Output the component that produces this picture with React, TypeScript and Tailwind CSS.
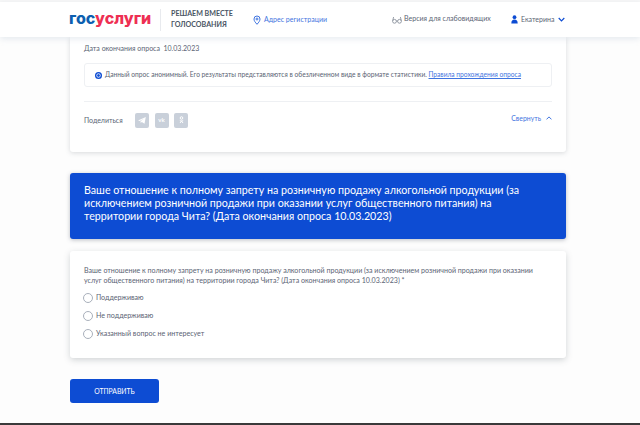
import React from "react";

const font = { fontFamily: '"Lato","Noto Sans",sans-serif' };

function Radio({ label }: { label: string }) {
  return (
    <label className="flex items-center h-[18px] gap-[3px] ml-[-1px]">
      <span className="w-[10px] h-[10px] rounded-full border border-[#a9b0bb] bg-white shrink-0" />
      <span className="text-[7.1px] text-[#5b6474]">{label}</span>
    </label>
  );
}

function Share({ children }: { children: React.ReactNode }) {
  return (
    <span className="w-[14px] h-[15px] rounded-[2px] bg-[#c9d0da] flex items-center justify-center">{children}</span>
  );
}

export default function App() {
  return (
    <div className="relative w-[640px] h-[425px] overflow-hidden bg-[#fdfdfd] flex flex-col" style={font}>
      <div className="h-[2px] bg-[#f7f7f7] shrink-0" />
      <header className="h-[35px] shrink-0 bg-white shadow-[0_2px_6px_rgba(170,185,205,0.28)] z-10 flex items-center">
        <span className="ml-[69px] w-[81px] text-[16px] font-extrabold leading-none mb-[3px] whitespace-nowrap" style={{ fontFamily: '"Inter",sans-serif' }}>
          <span className="text-[#0d5fb0]">гос</span>
          <span className="text-[#ee2f53]">услуги</span>
        </span>
        <span className="w-px h-[22px] bg-[#e8eaee] ml-[10px]" />
        <div className="ml-[10px] text-[7.1px] font-bold leading-[10.5px] text-[#4a5464] w-[82px]">
          <div>РЕШАЕМ ВМЕСТЕ</div>
          <div>ГОЛОСОВАНИЯ</div>
        </div>
        <svg width="8" height="10" viewBox="0 0 8 10" fill="none" stroke="#3f74e0" strokeWidth="1">
          <path d="M4 9.3C2.2 7.3 1 5.8 1 4a3 3 0 0 1 6 0c0 1.8-1.2 3.3-3 5.3z" />
          <circle cx="4" cy="4" r="1" />
        </svg>
        <span className="ml-[3px] text-[7px] text-[#3f74e0] w-[128px] whitespace-nowrap">Адрес регистрации</span>
        <svg width="10" height="8" viewBox="0 0 10 8" fill="none" stroke="#7d8592" strokeWidth="0.8">
          <circle cx="2.5" cy="5.3" r="1.9" />
          <circle cx="7.5" cy="5.3" r="1.9" />
          <path d="M4.4 5h1.2M.7 4.6 1.6 1M9.3 4.6 8.4 1" />
        </svg>
        <span className="ml-[2px] text-[7.05px] text-[#5b6474] w-[107px] whitespace-nowrap">Версия для слабовидящих</span>
        <svg width="7" height="9" viewBox="0 0 7 9" fill="#0d4cd3">
          <circle cx="3.5" cy="2.2" r="1.9" />
          <path d="M0.3 8.4C0.3 5.8 1.6 4.6 3.5 4.6s3.2 1.2 3.2 3.8z" />
        </svg>
        <span className="ml-[3px] text-[7px] text-[#5b6474]">Екатерина</span>
        <svg className="ml-[4px]" width="7" height="5" viewBox="0 0 7 5" fill="none" stroke="#0d4cd3" strokeWidth="1.2">
          <path d="M.7 1 3.5 3.8 6.3 1" />
        </svg>
      </header>

      <main className="w-[496px] ml-[70px] flex flex-col">
        <section className="bg-white rounded-b-[3px] shadow-[0_1px_5px_rgba(80,90,100,0.22)] h-[115px] px-[14px] pt-[6px] flex flex-col">
          <div className="text-[7px] text-[#5b6474] leading-[10px]">Дата окончания опроса&nbsp;&nbsp;10.03.2023</div>
          <div className="mt-[10px] h-[24px] rounded-[3px] border border-[#eef0f3] flex items-center pl-[10px] text-[6.65px] text-[#5b6474]">
            <svg className="shrink-0 mr-[3px]" width="7" height="7" viewBox="0 0 7 7">
              <circle cx="3.5" cy="3.5" r="3.5" fill="#0d4cd3" />
              <circle cx="3.5" cy="3.5" r="1.8" fill="none" stroke="#fff" strokeWidth="0.8" />
            </svg>
            <span className="whitespace-nowrap">
              Данный опрос анонимный. Его результаты представляются в обезличенном виде в формате статистики.{" "}
              <span className="text-[#3f74e0] underline">Правила прохождения опроса</span>
            </span>
          </div>
          <div className="mt-[14px] h-px bg-[#eef0f3]" />
          <div className="mt-[6px] flex items-center h-[24px]">
            <span className="text-[7px] text-[#5b6474] w-[51px]">Поделиться</span>
            <div className="flex gap-[5.5px]">
              <Share>
                <svg width="8" height="7" viewBox="0 0 8 7" fill="#fff"><path d="M0 3.4 7.8 0 6.5 6.8 3.8 5 2.7 6.1 2.5 4.3 6 1.6 1.9 4z" /></svg>
              </Share>
              <Share>
                <span className="text-[6px] font-bold text-white leading-none">vk</span>
              </Share>
              <Share>
                <svg width="5" height="8" viewBox="0 0 5 8" fill="none" stroke="#fff" strokeWidth="1"><circle cx="2.5" cy="2" r="1.3" /><path d="M.8 4.4c1 .7 2.4.7 3.4 0M2.5 5 1 7M2.5 5 4 7" /></svg>
              </Share>
            </div>
            <span className="ml-auto text-[6.9px] text-[#3f74e0] mb-[4px]">Свернуть</span>
            <svg className="ml-[5px] mb-[4px]" width="6" height="4" viewBox="0 0 6 4" fill="none" stroke="#3f74e0" strokeWidth="1"><path d="M.5 3.4 3 .9l2.5 2.5" /></svg>
          </div>
        </section>

        <section className="mt-[21px] h-[66px] rounded-[3px] bg-[#0d4cd3] shadow-[0_1px_4px_rgba(60,70,90,0.35)] pl-[14px] pr-[40px] pt-[10px] text-white text-[10.68px] leading-[13px]">
          Ваше отношение к полному запрету на розничную продажу алкогольной продукции (за исключением розничной продажи при оказании услуг общественного питания) на территории города Чита? (Дата окончания опроса 10.03.2023)
        </section>

        <section className="mt-[12px] h-[107px] rounded-[3px] bg-white shadow-[0_2px_6px_rgba(80,90,100,0.25)] px-[14px] pt-[15px]">
          <p className="text-[7.08px] leading-[10px] text-[#5b6474]">
            Ваше отношение к полному запрету на розничную продажу алкогольной продукции (за исключением розничной продажи при оказании услуг общественного питания) на территории города Чита? (Дата окончания опроса 10.03.2023) *
          </p>
          <div className="mt-[3px] flex flex-col">
            <Radio label="Поддерживаю" />
            <Radio label="Не поддерживаю" />
            <Radio label="Указанный вопрос не интересует" />
          </div>
        </section>

        <button className="mt-[21px] w-[89px] h-[24px] rounded-[3px] bg-[#0d4cd3] text-white text-[6.8px]">ОТПРАВИТЬ</button>
      </main>
      <div className="absolute left-0 right-0 bottom-0 h-[2px] bg-[#3a3a3a]" />
    </div>
  );
}
